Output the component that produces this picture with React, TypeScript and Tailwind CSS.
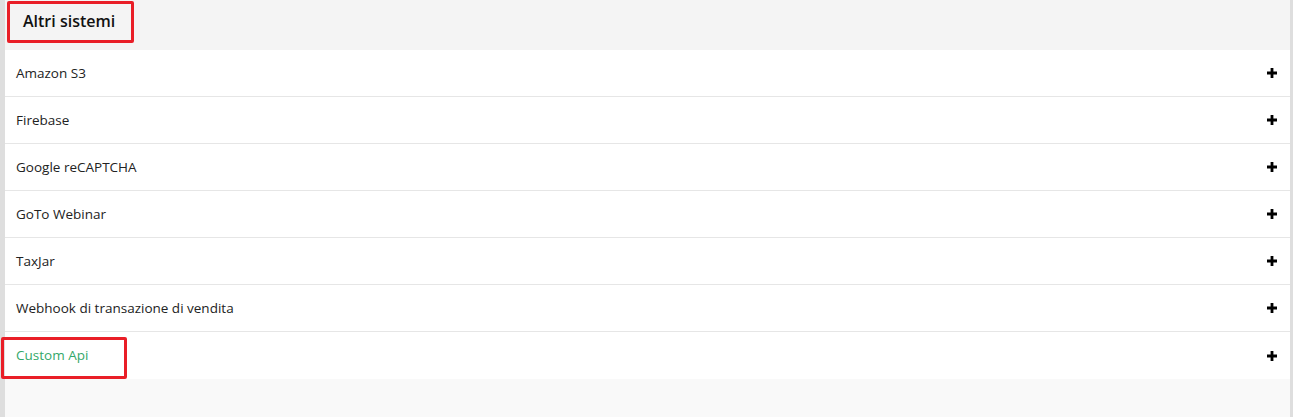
const rows = [
  "Amazon S3",
  "Firebase",
  "Google reCAPTCHA",
  "GoTo Webinar",
  "TaxJar",
  "Webhook di transazione di vendita",
];

function PlusIcon() {
  return (
    <svg width="10" height="10" viewBox="0 0 10 10" className="shrink-0">
      <path d="M3.6 0h2.8v3.6H10v2.8H6.4V10H3.6V6.4H0V3.6h3.6z" fill="#000" />
    </svg>
  );
}

export default function App() {
  return (
    <div className="relative h-[417px] w-[1293px] overflow-hidden" style={{ fontFamily: '"Open Sans", "Noto Sans", sans-serif' }}>
      <div className="h-full bg-[#f9f9f9] border-l-[5px] border-r-[3px] border-[#dedede]">
        <div className="h-[50px] bg-[#f4f4f4] flex items-center pl-[18px]">
          <span className="text-[16px] font-semibold text-[#111] pb-[8px]">Altri sistemi</span>
        </div>
        <div className="flex flex-col bg-white">
          {rows.map(r => (
            <div key={r} className="h-[47px] flex items-center justify-between pl-[11px] pr-[13px] border-b border-[#e6e6e6]">
              <span className="text-[13.5px] text-[#222]">{r}</span>
              <PlusIcon />
            </div>
          ))}
          <div className="h-[47px] flex items-center justify-between pl-[11px] pr-[13px]">
            <span className="text-[13.5px] text-[#34a86a]">Custom Api</span>
            <PlusIcon />
          </div>
        </div>
      </div>

      {/* annotation boxes */}
      <div className="absolute left-[7px] top-[1px] w-[127px] h-[42px] border-[3px] border-[#e91e27] rounded-[2px]" />
      <div className="absolute left-[1px] top-[337px] w-[126px] h-[42px] border-[3px] border-[#e91e27] rounded-[2px]" />
    </div>
  );
}
